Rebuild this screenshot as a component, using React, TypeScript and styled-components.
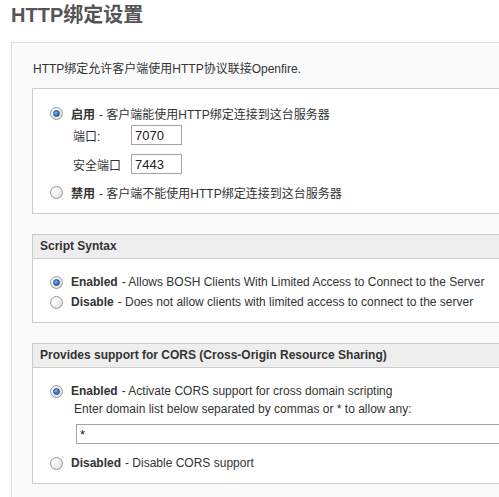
import React from 'react';
import styled, { createGlobalStyle } from 'styled-components';

const GlobalStyle = createGlobalStyle`
  html, body {
    margin: 0;
    padding: 0;
    overflow: hidden;
    background: #ffffff;
  }
  body {
    font-family: "Liberation Sans", "Noto Sans CJK SC", sans-serif;
    font-size: 12px;
    color: #333333;
  }
`;

const Page = styled.div`
  padding: 3px 0 0 11px;
  width: 580px;
`;

const Title = styled.h1`
  margin: 0 0 14px;
  font-size: 20px;
  line-height: 25px;
  font-weight: bold;
  color: #555555;
`;

const Panel = styled.div`
  border: 1px solid #dddddd;
  background: #fafafa;
  padding: 18px 0 0 20px;
  min-height: 480px;
`;

const Intro = styled.p`
  margin: 0 0 11px 1px;
  line-height: 16px;
`;

const Box = styled.div`
  border: 1px solid #cccccc;
  background: #ffffff;
  margin-bottom: 20px;
`;

const BoxHeader = styled.div`
  background: #eeeeee;
  border-bottom: 1px solid #cccccc;
  height: 23px;
  line-height: 23px;
  padding-left: 7px;
  font-weight: bold;
  color: #333333;
`;

const BoxBody = styled.div<{ $top: number; $bottom: number }>`
  padding: ${(p) => p.$top}px 0 ${(p) => p.$bottom}px 17px;
`;

const OptionRow = styled.label<{ $gap?: number }>`
  display: flex;
  align-items: center;
  height: 20px;
  margin-top: ${(p) => p.$gap ?? 0}px;
  white-space: nowrap;
`;

const Radio = styled.span<{ $checked?: boolean }>`
  position: relative;
  flex: none;
  width: 11px;
  height: 11px;
  margin-right: 8px;
  border: 1px solid #9a9a9a;
  border-radius: 50%;
  background: radial-gradient(circle at 35% 35%, #ffffff 0%, #f0f0f0 45%, #cfcfcf 100%);

  &::after {
    content: '';
    display: ${(p) => (p.$checked ? 'block' : 'none')};
    position: absolute;
    left: 2px;
    top: 2px;
    width: 5px;
    height: 5px;
    border-radius: 50%;
    border: 1px solid #1f4f86;
    background: radial-gradient(circle at 35% 35%, #7fb8ec 0%, #2d75c4 60%, #1b5296 100%);
  }
`;

const Strong = styled.b`
  margin-right: 4px;
  color: #333333;
`;

const FieldRow = styled.div<{ $gap: number }>`
  display: flex;
  align-items: center;
  margin: ${(p) => p.$gap}px 0 0 23px;
`;

const FieldLabel = styled.span`
  width: 58px;
  flex: none;
`;

const TextBox = styled.input<{ $width: number }>`
  box-sizing: border-box;
  width: ${(p) => p.$width}px;
  height: 20px;
  padding: 0 3px;
  border: 1px solid #a5a5a5;
  font-family: "Liberation Sans", sans-serif;
  font-size: 13px;
  color: #222222;
  background: #ffffff;
  outline: none;
`;

const Hint = styled.div`
  margin-left: 24px;
  line-height: 16px;
  white-space: nowrap;
`;

const DomainBox = styled.div`
  margin: 7px 0 0 26px;
`;

const App: React.FC = () => {
  return (
    <>
      <GlobalStyle />
      <Page>
        <Title>HTTP绑定设置</Title>
        <Panel>
          <Intro>HTTP绑定允许客户端使用HTTP协议联接Openfire.</Intro>

          <Box>
            <BoxBody $top={14} $bottom={11}>
              <OptionRow>
                <Radio $checked />
                <Strong>启用</Strong>- 客户端能使用HTTP绑定连接到这台服务器
              </OptionRow>
              <FieldRow $gap={2}>
                <FieldLabel>端口:</FieldLabel>
                <TextBox $width={51} defaultValue="7070" />
              </FieldRow>
              <FieldRow $gap={9}>
                <FieldLabel>安全端口</FieldLabel>
                <TextBox $width={51} defaultValue="7443" />
              </FieldRow>
              <OptionRow $gap={8}>
                <Radio />
                <Strong>禁用</Strong>- 客户端不能使用HTTP绑定连接到这台服务器
              </OptionRow>
            </BoxBody>
          </Box>

          <Box>
            <BoxHeader>Script Syntax</BoxHeader>
            <BoxBody $top={13} $bottom={10}>
              <OptionRow>
                <Radio $checked />
                <Strong>Enabled</Strong>- Allows BOSH Clients With Limited Access to Connect to the Server
              </OptionRow>
              <OptionRow>
                <Radio />
                <Strong>Disable</Strong>- Does not allow clients with limited access to connect to the server
              </OptionRow>
            </BoxBody>
          </Box>

          <Box>
            <BoxHeader>Provides support for CORS (Cross-Origin Resource Sharing)</BoxHeader>
            <BoxBody $top={13} $bottom={10}>
              <OptionRow>
                <Radio $checked />
                <Strong>Enabled</Strong>- Activate CORS support for cross domain scripting
              </OptionRow>
              <Hint>Enter domain list below separated by commas or * to allow any:</Hint>
              <DomainBox>
                <TextBox $width={460} defaultValue="*" />
              </DomainBox>
              <OptionRow $gap={9}>
                <Radio />
                <Strong>Disabled</Strong>- Disable CORS support
              </OptionRow>
            </BoxBody>
          </Box>
        </Panel>
      </Page>
    </>
  );
};

export default App;
